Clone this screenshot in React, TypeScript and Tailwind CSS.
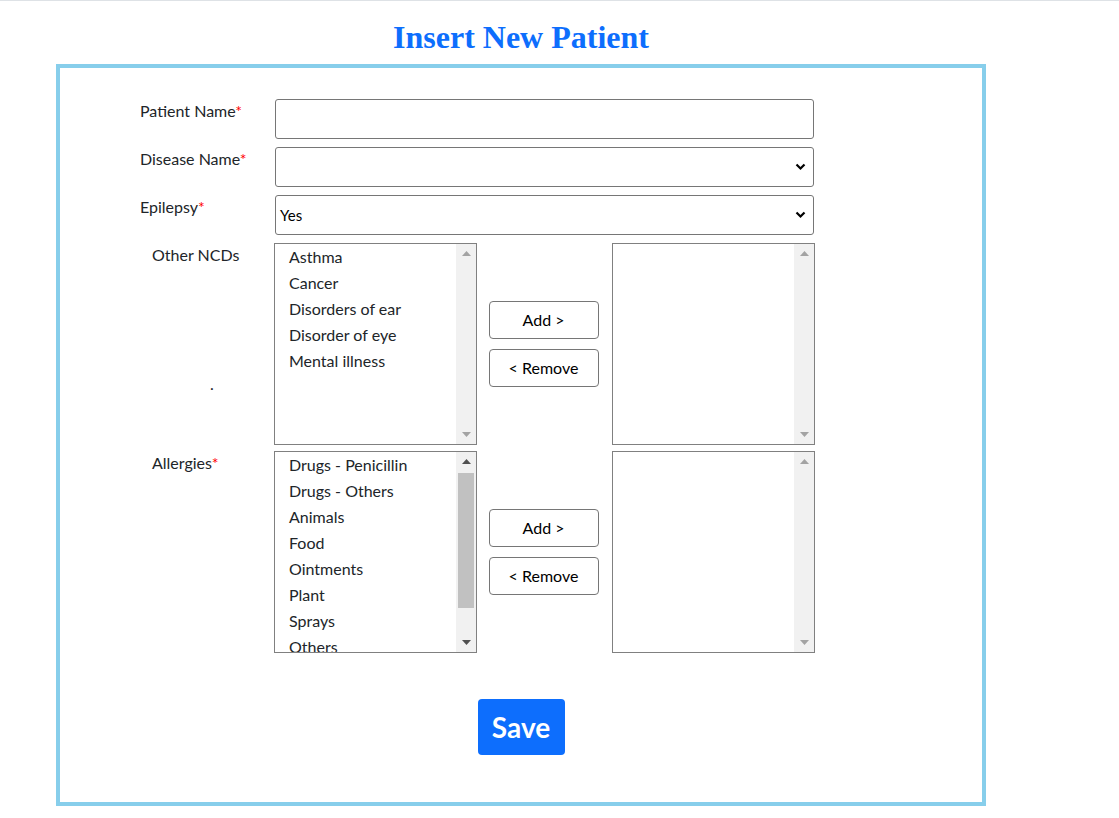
import React from "react";

const ncds = ["Asthma", "Cancer", "Disorders of ear", "Disorder of eye", "Mental illness"];
const allergies = [
  "Drugs - Penicillin",
  "Drugs - Others",
  "Animals",
  "Food",
  "Ointments",
  "Plant",
  "Sprays",
  "Others",
];

const Chevron = () => (
  <svg width="11" height="8" viewBox="0 0 11 8" className="absolute right-[7px] top-1/2 -translate-y-1/2">
    <path d="M1.5 1.5 L5.5 5.5 L9.5 1.5" fill="none" stroke="#000" strokeWidth="2.2" />
  </svg>
);

const Scrollbar = ({ thumb }: { thumb?: boolean }) => (
  <div className="w-[20px] bg-[#f1f1f1] flex flex-col items-center justify-between py-[7px] relative">
    <svg width="9" height="5" viewBox="0 0 9 5">
      <path d="M0 5 L4.5 0 L9 5 Z" fill={thumb ? "#505050" : "#a3a3a3"} />
    </svg>
    {thumb && <div className="absolute left-[2px] right-[2px] top-[21px] h-[135px] bg-[#c1c1c1]" />}
    <svg width="9" height="5" viewBox="0 0 9 5">
      <path d="M0 0 L4.5 5 L9 0 Z" fill={thumb ? "#505050" : "#a3a3a3"} />
    </svg>
  </div>
);

const ListBox = ({ items, thumb }: { items: string[]; thumb?: boolean }) => (
  <div className="w-[203px] h-[202px] border border-[#808080] flex bg-white overflow-hidden">
    <div className="flex-1 pl-[14px]">
      {items.map((item) => (
        <div key={item} className="h-[26px] leading-[26px] text-[16px] text-[#212529] whitespace-nowrap">
          {item}
        </div>
      ))}
    </div>
    <Scrollbar thumb={thumb} />
  </div>
);

const MoveButtons = () => (
  <div className="w-[135px] pr-[2px] flex flex-col items-center justify-center gap-[10px]">
    <button className="w-[110px] h-[38px] border border-[#767676] rounded-[4px] bg-white text-[16px] text-black">
      Add &gt;
    </button>
    <button className="w-[110px] h-[38px] border border-[#767676] rounded-[4px] bg-white text-[16px] text-black">
      &lt; Remove
    </button>
  </div>
);

const Req = () => <span className="text-[#ff0000]">*</span>;

const App: React.FC = () => {
  return (
    <div
      className="min-h-screen bg-white border-t border-[#dee2e6] text-[#212529]"
      style={{ fontFamily: '"Segoe UI", Lato, "Noto Sans", sans-serif' }}
    >
      <div className="w-[930px] ml-[56px]">
        <h1
          className="text-center text-[32px] font-bold text-[#0d6efd] leading-[40px] mt-[16px] mb-[7px]"
          style={{ fontFamily: '"Liberation Serif", "Times New Roman", serif' }}
        >
          Insert New Patient
        </h1>

        <div className="border-4 border-[#87ceeb] pt-[31px] pb-[47px] pl-[80px]">
          <div className="flex flex-col gap-[8px]">
            <div className="flex">
              <label className="w-[135px] text-[16px] leading-[22px] pt-[1px]">
                Patient Name<Req />
              </label>
              <input className="w-[539px] h-[40px] border border-[#767676] rounded-[3px] px-2" />
            </div>
            <div className="flex">
              <label className="w-[135px] text-[16px] leading-[22px] pt-[1px]">
                Disease Name<Req />
              </label>
              <div className="relative w-[539px] h-[40px] border border-[#767676] rounded-[3px] bg-white">
                <Chevron />
              </div>
            </div>
            <div className="flex">
              <label className="w-[135px] text-[16px] leading-[22px] pt-[1px]">
                Epilepsy<Req />
              </label>
              <div className="relative w-[539px] h-[40px] border border-[#767676] rounded-[3px] bg-white flex items-center pl-[4px] text-[15px] text-black">
                Yes
                <Chevron />
              </div>
            </div>

            <div className="flex">
              <div className="w-[134px] pl-[12px] text-[16px] leading-[22px] pt-[1px] flex flex-col">
                <span>Other NCDs</span>
                <span className="pl-[58px] mt-[110px] leading-none">.</span>
              </div>
              <ListBox items={ncds} />
              <MoveButtons />
              <ListBox items={[]} />
            </div>

            <div className="flex mt-[-2px]">
              <div className="w-[134px] pl-[12px] text-[16px] leading-[22px] pt-[1px]">
                Allergies<Req />
              </div>
              <ListBox items={allergies} thumb />
              <MoveButtons />
              <ListBox items={[]} />
            </div>
          </div>

          <div className="flex justify-center mt-[46px] pr-[80px]">
            <button className="w-[87px] h-[56px] bg-[#0d6efd] text-white text-[28px] font-bold rounded-[4px]">
              Save
            </button>
          </div>
        </div>
      </div>
    </div>
  );
};

export default App;
